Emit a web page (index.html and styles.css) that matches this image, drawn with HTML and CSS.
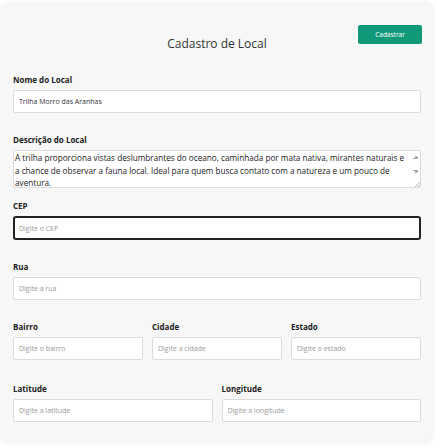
FILE: index.html
```html
<!DOCTYPE html>
<html lang="pt-BR">
<head>
<meta charset="utf-8">
<title>Cadastro de Local</title>
<link rel="stylesheet" href="styles.css">
</head>
<body>
<div class="card">
  <div class="header">
    <button class="btn-primary" type="button">Cadastrar</button>
    <h1 class="title">Cadastro de Local</h1>
  </div>
  <form class="form">
    <div class="field">
      <label class="label">Nome do Local</label>
      <input class="input" type="text" value="Trilha Morro das Aranhas">
    </div>
    <div class="field field-tight">
      <label class="label">Descrição do Local</label>
      <textarea class="textarea">A trilha proporciona vistas deslumbrantes do oceano, caminhada por mata nativa, mirantes naturais e a chance de observar a fauna local. Ideal para quem busca contato com a natureza e um pouco de aventura.</textarea>
    </div>
    <div class="field">
      <label class="label">CEP</label>
      <input class="input input-focus" type="text" placeholder="Digite o CEP">
    </div>
    <div class="field">
      <label class="label">Rua</label>
      <input class="input" type="text" placeholder="Digite a rua">
    </div>
    <div class="row row-3">
      <div class="field">
        <label class="label">Bairro</label>
        <input class="input" type="text" placeholder="Digite o bairro">
      </div>
      <div class="field">
        <label class="label">Cidade</label>
        <input class="input" type="text" placeholder="Digite a cidade">
      </div>
      <div class="field">
        <label class="label">Estado</label>
        <input class="input" type="text" placeholder="Digite o estado">
      </div>
    </div>
    <div class="row row-2">
      <div class="field">
        <label class="label">Latitude</label>
        <input class="input" type="text" placeholder="Digite a latitude">
      </div>
      <div class="field">
        <label class="label">Longitude</label>
        <input class="input" type="text" placeholder="Digite a longitude">
      </div>
    </div>
  </form>
</div>
</body>
</html>
```
FILE: styles.css
```css
* { box-sizing: border-box; }
html, body { margin: 0; padding: 0; background: #ffffff; }
body {
  font-family: "Open Sans", "Noto Sans", sans-serif;
  color: #333;
  padding: 2px 5px 2px 1px;
}
.card {
  background: #f7f7f7;
  border-radius: 8px;
  box-shadow: 0 0 3px rgba(0,0,0,0.08);
  padding: 23px 12px 20px 12px;
  height: 442px;
}
.header {
  display: grid;
}
.btn-primary {
  grid-area: 1 / 1;
  justify-self: end;
  align-self: start;
  width: 64px;
  height: 19px;
  margin-right: -1px;
  background: #119a7a;
  color: #fff;
  border: none;
  border-radius: 2px;
  font-family: "Open Sans", sans-serif;
  font-size: 6.5px;
  padding: 0;
}
.title {
  grid-area: 1 / 1;
  margin: 11px 0 0 0;
  text-align: center;
  font-size: 12px;
  line-height: 16px;
  font-weight: 400;
  color: #333;
}
.form {
  display: flex;
  flex-direction: column;
  gap: 22px;
  margin-top: 23px;
}
.field {
  display: flex;
  flex-direction: column;
  min-width: 0;
}
.field-tight { margin-bottom: -9px; }
.label {
  font-size: 8px;
  line-height: 10px;
  font-weight: 700;
  color: #222;
  margin-bottom: 5px;
}
.input {
  height: 23px;
  width: 100%;
  border: 1px solid #dcdcdc;
  border-radius: 2px;
  background: #fff;
  font-family: "Open Sans", sans-serif;
  font-size: 7px;
  color: #333;
  padding: 0 5px;
  outline: none;
}
.input::placeholder { color: #9a9a9a; }
.input-focus {
  height: 24px;
  border: 2px solid #222;
  border-radius: 3px;
  padding: 0 4px;
}
.textarea {
  width: 100%;
  height: 38px;
  border: 1px solid #dcdcdc;
  border-radius: 2px;
  background-color: #fff;
  background-repeat: no-repeat;
  background-image:
    linear-gradient(to top left, #a6a6a6 50%, transparent 50%),
    linear-gradient(to top right, #a6a6a6 50%, transparent 50%),
    linear-gradient(to bottom left, #a6a6a6 50%, transparent 50%),
    linear-gradient(to bottom right, #a6a6a6 50%, transparent 50%),
    linear-gradient(to bottom right, transparent 0 52%, #b0b0b0 52% 62%, transparent 62% 76%, #b0b0b0 76% 86%, transparent 86%);
  background-size: 3px 3px, 3px 3px, 3px 3px, 3px 3px, 6px 6px;
  background-position:
    right 4px top 5px,
    right 1px top 5px,
    right 4px top 19px,
    right 1px top 19px,
    right 0 bottom 0;
  font-family: "Open Sans", sans-serif;
  font-size: 8.2px;
  line-height: 12.5px;
  color: #222;
  padding: 1px 13px 1px 1px;
  resize: none;
  display: block;
  overflow: hidden;
}
.row {
  display: grid;
  gap: 9px;
}
.row-3 { grid-template-columns: repeat(3, 1fr); }
.row-2 { grid-template-columns: repeat(2, 1fr); margin-top: 2px; }
```
